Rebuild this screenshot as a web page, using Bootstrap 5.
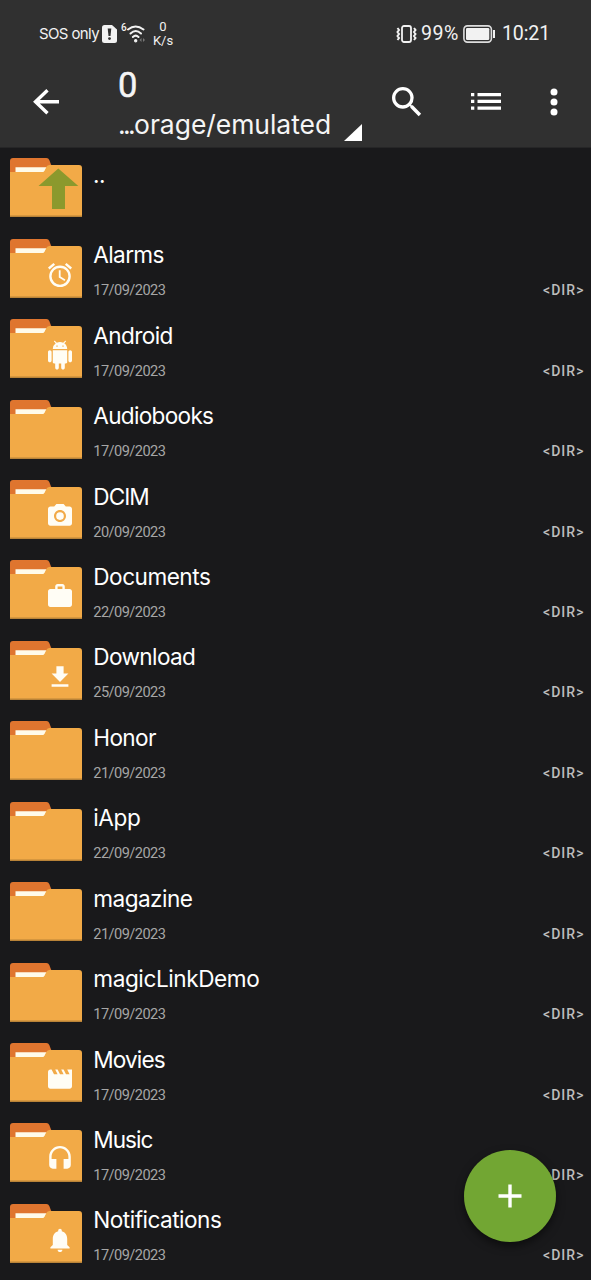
<!DOCTYPE html>
<html lang="en">
<head>
<meta charset="utf-8">
<meta name="viewport" content="width=device-width, initial-scale=1">
<title>File manager</title>
<link href="https://cdn.jsdelivr.net/npm/bootstrap@5.3.0/dist/css/bootstrap.min.css" rel="stylesheet">
<style>
  body { background: #19191b; color: #fff; font-family: Inter, sans-serif; height: 1280px; }
  svg { display: block; flex: none; }
  .app-head { background: #303030; height: 148px; border-bottom: 1px solid #262627; }
  .status { height: 67px; padding: 0 41px 0 39px; color: #f2f2f2; }
  .din { font-family: Roboto, sans-serif; }
  .carrier { font-size: 15px; line-height: 20px; width: 63px; }
  .speed { font-size: 13px; line-height: 14px; width: 24px; margin-left: 5px; }
  .gen { font-size: 10px; line-height: 10px; width: 6px; font-weight: 500; margin: 0 0 11px 4px; }
  .clock { font-size: 19.6px; line-height: 24px; padding-top: 1px; }
  .tools { height: 80px; padding-left: 33px; }
  .where { width: 213px; margin-left: 59px; color: #f5f5f5; }
  .leaf { font-size: 34.5px; line-height: 34px; margin-top: 1px; margin-left: -1px; -webkit-text-stroke: .5px; }
  .trail { font-size: 26.5px; line-height: 32px; margin-top: 6px; margin-left: -1px; }
  .dots { letter-spacing: -2.6px; margin-right: 1px; }
  #files { padding-top: .45px; }
  .entry { height: 80.42px; padding: 10px 7px 0 10px; }
  .fname { font-size: 22.6px; line-height: 30px; margin-top: 1.6px; }
  .fdate { font-size: 14.6px; line-height: 20px; margin-top: 10px; color: #a6a6a6; }
  .kind { font-size: 13.2px; line-height: 20px; color: #bdbdbd; font-weight: 500; width: 41px; margin-top: 41.600px; font-family: Roboto, sans-serif; font-size: 14px; }
  .fab { right: 35px; bottom: 38px; width: 92px; height: 92px; background: #72a633; box-shadow: 0 4px 9px rgba(0,0,0,.5); }
  [data-fit] { white-space: nowrap; }
</style>
</head>
<body class="overflow-hidden position-relative">
<header class="app-head">
  <div class="status d-flex align-items-center">
    <div class="carrier"><span data-fit="60">SOS only</span></div>
    <svg width="15" height="18" viewBox="0 0 15 18"><path d="M2.500 0H10L15 4.500V15.500Q15 18 12.500 18H2.500Q0 18 0 15.500V2.500Q0 0 2.500 0Z" fill="#f2f2f2"/><path d="M5.700 3.500H9.300L8.500 11H6.500Z" fill="#303030"/><circle cx="7.500" cy="13.600" r="1.400" fill="#303030"/></svg>
    <div class="gen din">6</div>
    <svg width="19" height="18" viewBox="0 0 19 18" fill="none" stroke="#f2f2f2" stroke-width="2" stroke-linecap="round"><path d="M1 4.500Q8.500-1.500 16.500 4.500M3.500 8.500Q8.700 3.600 14 8.500M5.900 12Q8.700 9.300 11.500 12"/><circle cx="8.700" cy="15.700" r="1.100" fill="#f2f2f2" stroke-width="1.200"/><path d="M14.500 13L12.500 15L14.500 17ZM16 13L18 15L16 17Z" fill="#777" stroke="none"/></svg>
    <div class="speed din text-center">0<br>K/s</div>
    <div class="ms-auto d-flex align-items-center clock din">
      <svg width="21" height="18" viewBox="0 0 21 18" fill="none" stroke="#f2f2f2"><rect x="6" y="1" width="9" height="16" rx="2" stroke-width="1.800"/><path d="M1.500 3L3 5L1.500 7L3 9L1.500 11L3 13L1.500 15M18 3L19.500 5L18 7L19.500 9L18 11L19.500 13L18 15" stroke-width="2"/></svg>
      <div class="ms-1"><span data-fit="38">99%</span></div>
      <svg class="ms-1" width="33" height="18" viewBox="0 0 33 18"><rect x=".9" y=".9" width="27.500" height="16.200" rx="3.500" fill="none" stroke="#ddd" stroke-width="1.600"/><rect x="3" y="3" width="23.300" height="12" rx="1.200" fill="#f2f2f2"/><path d="M31 5V13" stroke="#f2f2f2" stroke-width="2"/></svg>
      <div style="margin-left:6px"><span data-fit="48">10:21</span></div>
    </div>
  </div>
  <div class="tools d-flex">
    <svg width="27" height="26" viewBox="0 0 27 26" style="margin-top:22px" fill="none" stroke="#fff" stroke-width="3.400"><path d="M14.500 1.300L2.500 12.700L14.500 24.300M2.500 12.700H26"/></svg>
    <div class="where">
      <div class="leaf din">0</div>
      <div class="trail text-nowrap"><span class="dots">...</span><span data-fit="197">orage/emulated</span></div>
    </div>
    <svg width="18" height="17" viewBox="0 0 18 17" style="margin:57px 0 0 12px"><path d="M18 0V17H0Z" fill="#fff"/></svg>
    <svg width="40" height="40" viewBox="0 0 24 24" style="margin:15px 0 0 24.500px" fill="#fff"><path d="M15.500 14h-.79l-.28-.27A6.470 6.470 0 0 0 16 9.500 6.500 6.500 0 1 0 9.500 16c1.610 0 3.090-.59 4.230-1.570l.27.28v.79l5 4.990L20.490 19l-4.990-5zm-6 0C7.010 14 5 11.990 5 9.500S7.010 5 9.500 5 14 7.010 14 9.500 11.990 14 9.500 14z"/></svg>
    <svg width="30" height="17" viewBox="0 0 30 17" style="margin:26px 0 0 44px" fill="#fff"><path d="M0 0h3.300v3.300H0zM6.500 0H30v3.300H6.500zM0 6.800h3.300v3.300H0zM6.500 6.800H30v3.300H6.500zM0 13.500h3.300v3.300H0zM6.500 13.500H30v3.300H6.500z"/></svg>
    <svg width="8" height="28" viewBox="0 0 8 28" style="margin:21px 0 0 49.500px" fill="#fff"><circle cx="4" cy="4" r="3.500"/><circle cx="4" cy="14" r="3.500"/><circle cx="4" cy="24" r="3.500"/></svg>
  </div>
</header>
<main id="files"></main>
<button class="fab btn rounded-circle border-0 p-0 position-absolute d-flex align-items-center justify-content-center" aria-label="Add">
  <svg width="24" height="24" viewBox="0 0 24 24" stroke="#fff" stroke-width="3.400"><path d="M12 .5V23.500M.5 12H23.500"/></svg>
</button>
<script src="https://cdn.jsdelivr.net/npm/bootstrap@5.3.0/dist/js/bootstrap.bundle.min.js"></script>
<script>
  const glyphs = {
    alarm: 'M22 5.720l-4.600-3.860-1.290 1.530 4.600 3.860L22 5.720zM7.880 3.390L6.600 1.860 2 5.710l1.290 1.530 4.590-3.850zM12.500 8H11v6l4.750 2.850.75-1.230-4-2.370V8zM12 4a9 9 0 1 0 0 18 9 9 0 0 0 0-18zm0 16a7 7 0 1 1 0-14 7 7 0 0 1 0 14z',
    android: 'M6 18c0 .55.45 1 1 1h1v3.500c0 .83.67 1.500 1.500 1.500s1.500-.67 1.500-1.500V19h2v3.500c0 .83.67 1.500 1.500 1.500s1.500-.67 1.500-1.500V19h1c.55 0 1-.45 1-1V8H6v10zM3.500 8C2.670 8 2 8.670 2 9.500v7c0 .83.67 1.500 1.500 1.500S5 17.330 5 16.500v-7C5 8.670 4.330 8 3.500 8zm17 0c-.83 0-1.500.67-1.500 1.500v7c0 .83.67 1.500 1.500 1.500s1.500-.67 1.500-1.500v-7c0-.83-.67-1.500-1.500-1.500zm-4.970-5.840l1.300-1.300c.2-.2.2-.51 0-.71-.2-.2-.51-.2-.71 0l-1.480 1.480A5.840 5.840 0 0 0 12 1c-.96 0-1.860.23-2.660.63L7.850.15c-.2-.2-.51-.2-.71 0-.2.2-.2.51 0 .71l1.310 1.310A5.980 5.980 0 0 0 6 7h12c0-1.990-.97-3.750-2.470-4.840zM10 5H9V4h1v1zm5 0h-1V4h1v1z',
    camera: 'M12 8.800a3.200 3.200 0 1 0 0 6.400 3.200 3.200 0 0 0 0-6.400zM9 2L7.170 4H4c-1.100 0-2 .9-2 2v12c0 1.100.9 2 2 2h16c1.100 0 2-.9 2-2V6c0-1.100-.9-2-2-2h-3.170L15 2H9zm3 15c-2.760 0-5-2.240-5-5s2.240-5 5-5 5 2.240 5 5-2.240 5-5 5z',
    work: 'M20 6h-4V4c0-1.110-.89-2-2-2h-4c-1.110 0-2 .89-2 2v2H4c-1.110 0-1.990.89-1.990 2L2 19c0 1.110.89 2 2 2h16c1.110 0 2-.89 2-2V8c0-1.110-.89-2-2-2zm-6 0h-4V4h4v2z',
    download: 'M19 9h-4V3H9v6H5l7 7 7-7zM5 18v2h14v-2H5z',
    movie: 'M18 4l2 4h-3l-2-4h-2l2 4h-3l-2-4H8l2 4H7L5 4H4c-1.100 0-1.990.9-1.990 2L2 18c0 1.100.9 2 2 2h16c1.100 0 2-.9 2-2V4h-4z',
    headset: 'M12 1c-4.970 0-9 4.030-9 9v7c0 1.660 1.340 3 3 3h3v-8H5v-2c0-3.870 3.130-7 7-7s7 3.130 7 7v2h-4v8h3c1.660 0 3-1.340 3-3v-7c0-4.970-4.030-9-9-9z',
    bell: 'M12 22c1.100 0 2-.9 2-2h-4c0 1.100.89 2 2 2zm6-6v-5c0-3.070-1.640-5.640-4.500-6.320V4c0-.83-.67-1.500-1.500-1.500s-1.500.67-1.500 1.500v.68C7.630 5.360 6 7.920 6 11v5l-2 2v1h16v-1l-2-2z'
  };
  // name, date, glyph, name width in px
  const entries = [
    ['..', '', 'up', 12],
    ['Alarms', '17/09/2023', 'alarm', 70.5],
    ['Android', '17/09/2023', 'android', 79.5],
    ['Audiobooks', '17/09/2023', '', 120],
    ['DCIM', '20/09/2023', 'camera', 55.5],
    ['Documents', '22/09/2023', 'work', 117],
    ['Download', '25/09/2023', 'download', 102],
    ['Honor', '21/09/2023', '', 62.5],
    ['iApp', '22/09/2023', '', 47],
    ['magazine', '21/09/2023', '', 99],
    ['magicLinkDemo', '17/09/2023', '', 166],
    ['Movies', '17/09/2023', 'movie', 71.5],
    ['Music', '17/09/2023', 'headset', 59],
    ['Notifications', '17/09/2023', 'bell', 128]
  ];
  const mark = g => g === 'up'
    ? '<path d="M48.300 10.500L68.300 28H55V51H42V28H28.500Z" fill="#8b992d"/>'
    : g ? `<path transform="translate(35.600 21.700) scale(1.200)" fill="#fffdf5" d="${glyphs[g]}"/>` : '';
  document.getElementById('files').innerHTML = entries.map(([name, date, g, w]) => `
    <div class="entry d-flex">
      <svg width="72" height="59" viewBox="0 0 72 59">
        <path d="M0 16V3Q0 0 3 0H36.500Q38.500 0 39.300 2L42 9V16Z" fill="#df752f"/>
        <path d="M5.500 9.200H37L34 14.500H5.500Z" fill="#fffbea"/>
        <path d="M0 14H32.500Q34 14 34.700 12.500L36.500 8.800Q37.300 7 39.500 7H69Q72 7 72 10V59H0Z" fill="#f2aa47"/>
        <path d="M0 57.400H72V59H0Z" fill="#b98338"/>${mark(g)}
      </svg>
      <div class="flex-grow-1" style="margin-left:${date ? 11.3 : 11}px">
        <div class="fname"><span data-fit="${w}">${name}</span></div>
        <div class="fdate din">${date && `<span data-fit="72">${date}</span>`}</div>
      </div>
      <div class="kind">${date && '<span data-fit="41.5">&lt;DIR&gt;</span>'}</div>
    </div>`).join('');
  // Tighten or loosen tracking so each label fills its intended width.
  document.querySelectorAll('[data-fit]').forEach(el => {
    const gap = (el.dataset.fit - el.getBoundingClientRect().width) / el.textContent.length;
    el.style.letterSpacing = gap.toFixed(3) + 'px';
  });
</script>
</body>
</html>
